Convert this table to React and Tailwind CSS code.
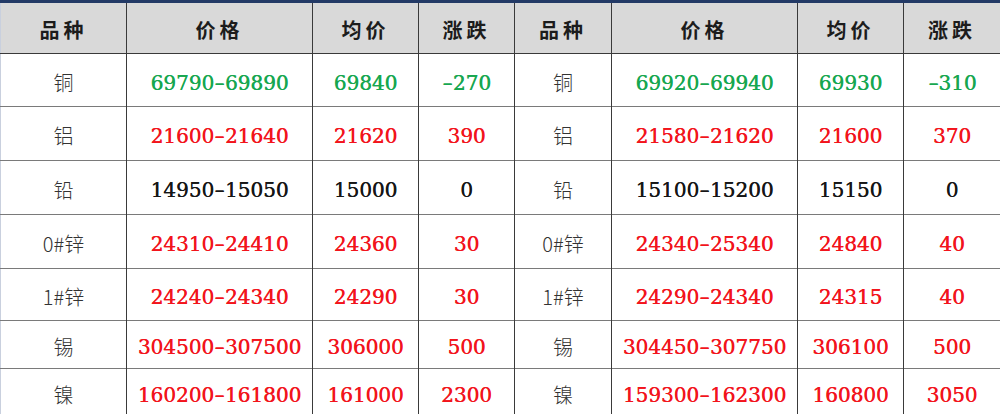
const cols = ["w-[126px]", "w-[186px]", "w-[106px]", "w-[96px]", "w-[97px]", "w-[186px]", "w-[106px]", "w-[97px]"];

const headers = ["品种", "价格", "均价", "涨跌", "品种", "价格", "均价", "涨跌"];

const rows = [
  { h: "h-[53px]", c: "g", a: ["铜", "69790-69890", "69840", "-270"], b: ["铜", "69920-69940", "69930", "-310"] },
  { h: "h-[54px]", c: "r", a: ["铝", "21600-21640", "21620", "390"], b: ["铝", "21580-21620", "21600", "370"] },
  { h: "h-[54px]", c: "k", a: ["铅", "14950-15050", "15000", "0"], b: ["铅", "15100-15200", "15150", "0"] },
  { h: "h-[54px]", c: "r", a: ["0#锌", "24310-24410", "24360", "30"], b: ["0#锌", "24340-25340", "24840", "40"] },
  { h: "h-[52px]", c: "r", a: ["1#锌", "24240-24340", "24290", "30"], b: ["1#锌", "24290-24340", "24315", "40"] },
  { h: "h-[48px]", c: "r", a: ["锡", "304500-307500", "306000", "500"], b: ["锡", "304450-307750", "306100", "500"] },
  { h: "h-[48px]", c: "r", a: ["镍", "160200-161800", "161000", "2300"], b: ["镍", "159300-162300", "160800", "3050"] },
];

const colorOf = {
  g: "text-[#17a750]",
  r: "text-[#f2141c]",
  k: "text-[#161616]",
};

// dash in the ranges is drawn wider in the original font
const Dash = () => <span className="inline-block mx-[2px] scale-x-[1.6]">-</span>;

const Num = ({ v }) => {
  if (!v.includes("-")) return v;
  const parts = v.split("-");
  return <>{parts[0]}<Dash />{parts[1]}</>;
};

const Cell = ({ children, idx, className = "" }) => (
  <td className={`${cols[idx]} border-r border-r-[#3a3a3a] text-center p-0 pt-[5px] ${className}`}>
    {children}
  </td>
);

export default function App() {
  return (
    <div className="w-[1000px] h-[414px] overflow-hidden bg-white">
      <table className="table-fixed border-collapse w-[999px] border-l border-l-[#c9d0de] border-t-[3px] border-t-[#233a66]">
        <thead>
          <tr className="h-[52px] bg-[#d9d9d9] border-b border-b-[#3a3a3a]">
            {headers.map((t, i) => (
              <th
                key={i}
                className={`${cols[i]} border-r border-r-[#3a3a3a] p-0 pt-[3px] text-center font-semibold text-[20px] tracking-[4px] text-[#1c1c1c] font-['Noto_Sans_CJK_SC',sans-serif]`}
              >
                {t}
              </th>
            ))}
          </tr>
        </thead>
        <tbody>
          {rows.map((r, ri) => (
            <tr key={ri} className={`${r.h} border-b-[1.5px] border-b-[#7a7a7a]`}>
              {[r.a, r.b].map((side, si) =>
                side.map((v, vi) => {
                  const idx = si * 4 + vi;
                  if (vi === 0) {
                    return (
                      <Cell key={idx} idx={idx} className="text-[20px] font-light text-[#333333] font-['Noto_Sans_CJK_SC',sans-serif]">
                        {v}
                      </Cell>
                    );
                  }
                  return (
                    <Cell key={idx} idx={idx} className={`text-[20px] ${colorOf[r.c]} font-['DejaVu_Serif',serif] [text-shadow:0.4px_0_0_currentcolor]`}>
                      <Num v={v} />
                    </Cell>
                  );
                })
              )}
            </tr>
          ))}
        </tbody>
      </table>
    </div>
  );
}
